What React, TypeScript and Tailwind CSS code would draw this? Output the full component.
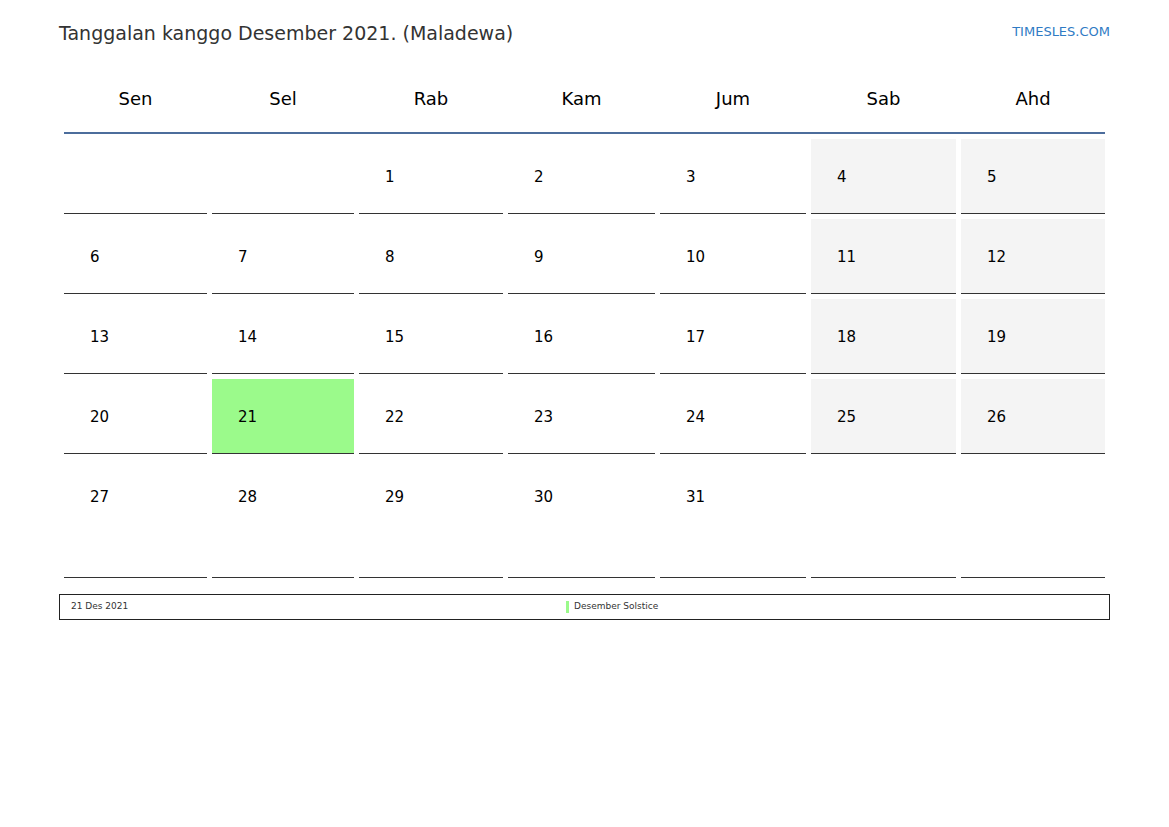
const days = ['Sen', 'Sel', 'Rab', 'Kam', 'Jum', 'Sab', 'Ahd'];

const weeks: (number | null)[][] = [
  [null, null, 1, 2, 3, 4, 5],
  [6, 7, 8, 9, 10, 11, 12],
  [13, 14, 15, 16, 17, 18, 19],
  [20, 21, 22, 23, 24, 25, 26],
  [27, 28, 29, 30, 31, null, null],
];

const holiday = 21;

export default function App() {
  return (
    <div className="w-[1169px] h-[827px] bg-white font-['DejaVu_Sans',sans-serif] text-black">
      <div className="pl-[59px] pr-[59px] pt-[20px]">
        {/* Title bar */}
        <div className="flex items-start justify-between h-[26px]">
          <h1 className="text-[19px] leading-[26px] text-[#333]">
            Tanggalan kanggo Desember 2021. (Maladewa)
          </h1>
          <span className="text-[13px] leading-[24px] text-[#2f7bc4]">TIMESLES.COM</span>
        </div>

        {/* Calendar grid */}
        <div className="px-[5px] mt-[18px]">
          <div className="grid grid-cols-[143px_142px_144px_147px_146px_145px_144px] gap-x-[5px]">
            {days.map((d) => (
              <div key={d} className="h-[68px] flex items-center justify-center text-[18px]">
                {d}
              </div>
            ))}
          </div>
          <div className="h-[2px] bg-[#4c6d9c]" />

          <div className="mt-[5px] flex flex-col gap-y-[5px]">
            {weeks.map((week, wi) => (
              <div
                key={wi}
                className="grid grid-cols-[143px_142px_144px_147px_146px_145px_144px] gap-x-[5px]"
              >
                {week.map((n, di) => {
                  const weekend = di >= 5 && n !== null;
                  const isHoliday = n === holiday;
                  return (
                    <div
                      key={di}
                      className={
                        (wi === 4 ? 'h-[119px] ' : 'h-[75px] ') +
                        'border-b border-[#333] pl-[26px] pt-[28px] text-[15px] leading-[20px] ' +
                        (isHoliday ? 'bg-[#9bfa8b]' : weekend ? 'bg-[#f4f4f4]' : 'bg-white')
                      }
                    >
                      {n}
                    </div>
                  );
                })}
              </div>
            ))}
          </div>
        </div>

        {/* Legend */}
        <div className="mt-[16px] h-[26px] border border-[#222] flex items-center text-[9px] text-[#333]">
          <div className="w-[506px] pl-[11px]">21 Des 2021</div>
          <div className="flex items-center gap-[5px]">
            <span className="w-[3px] h-[12px] bg-[#9bfa8b]" />
            <span>Desember Solstice</span>
          </div>
        </div>
      </div>
    </div>
  );
}
